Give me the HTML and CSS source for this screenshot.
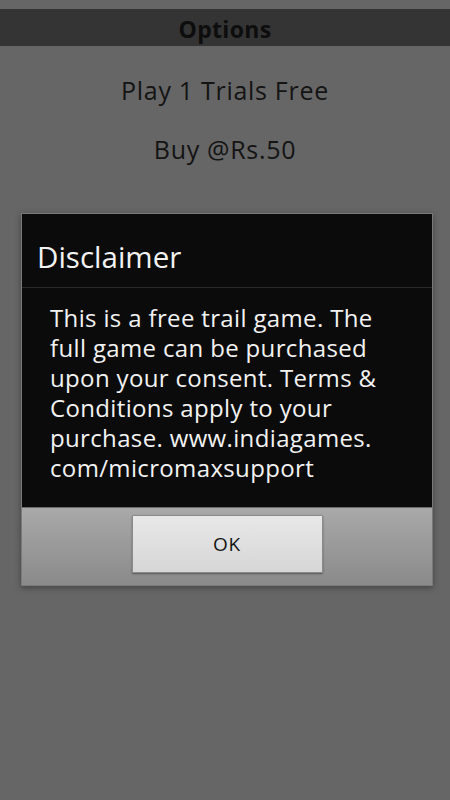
FILE: index.html
```html
<!DOCTYPE html>
<html lang="en">
<head>
    <meta charset="UTF-8">
    <meta name="viewport" content="width=device-width, initial-scale=1.0">
    <title>Options</title>
    <link rel="stylesheet" href="styles.css">
</head>
<body>
    <div class="screen">
        <div class="title-bar">Options</div>

        <div class="menu">
            <div class="menu-item">Play 1 Trials Free</div>
            <div class="menu-item">Buy @Rs.50</div>
        </div>

        <div class="dialog">
            <div class="dialog-title">Disclaimer</div>
            <div class="dialog-body">
                This is a free trail game. The full game can be purchased upon your consent. Terms &amp; Conditions apply to your purchase. www.indiagames.<br>com/micromaxsupport
            </div>
            <div class="dialog-buttons">
                <button class="ok-btn">OK</button>
            </div>
        </div>
    </div>
</body>
</html>
```

FILE: styles.css
```css
body {
    margin: 0;
    font-family: "Open Sans", "Noto Sans", sans-serif;
    background-color: #666666;
}
.screen {
    width: 450px;
    height: 800px;
    padding-top: 9px;
    box-sizing: border-box;
    display: flex;
    flex-direction: column;
}
.title-bar {
    height: 37px;
    background-color: #343434;
    color: #0d0d0d;
    font-size: 23px;
    font-weight: bold;
    letter-spacing: 0.3px;
    text-align: center;
    line-height: 40px;
}
.menu {
    display: flex;
    flex-direction: column;
    align-items: center;
    padding-top: 30px;
    gap: 30px;
    color: #141414;
    font-size: 25px;
    letter-spacing: 0.7px;
}
.menu-item {
    line-height: 29px;
}
.dialog {
    margin: 49px 17px 0 21px;
    border: 1px solid #7a7a7a;
    box-shadow: 0 2px 6px rgba(0, 0, 0, 0.35);
    background-color: #0b0b0b;
}
.dialog-title {
    color: #f2f2f2;
    font-size: 29.5px;
    padding: 22px 0 0 15px;
    height: 51px;
    border-bottom: 1px solid #2a2a2a;
}
.dialog-body {
    color: #f2f2f2;
    font-size: 24px;
    letter-spacing: 0.35px;
    line-height: 30px;
    padding: 15px 20px 24px 28px;
}
.dialog-buttons {
    height: 78px;
    border-top: 1px solid #6a6a6a;
    background: linear-gradient(#a9a9a9, #8a8a8a);
    display: flex;
    justify-content: center;
    padding-top: 7px;
    box-sizing: border-box;
}
.ok-btn {
    width: 191px;
    height: 58px;
    border: 1px solid #8a8a8a;
    border-radius: 1px;
    background: linear-gradient(#e8e8e8, #d6d6d6);
    box-shadow: 0 1px 2px rgba(0, 0, 0, 0.4);
    font-family: "Open Sans", "Noto Sans", sans-serif;
    font-size: 19px;
    letter-spacing: 0.8px;
    color: #141414;
}
```
